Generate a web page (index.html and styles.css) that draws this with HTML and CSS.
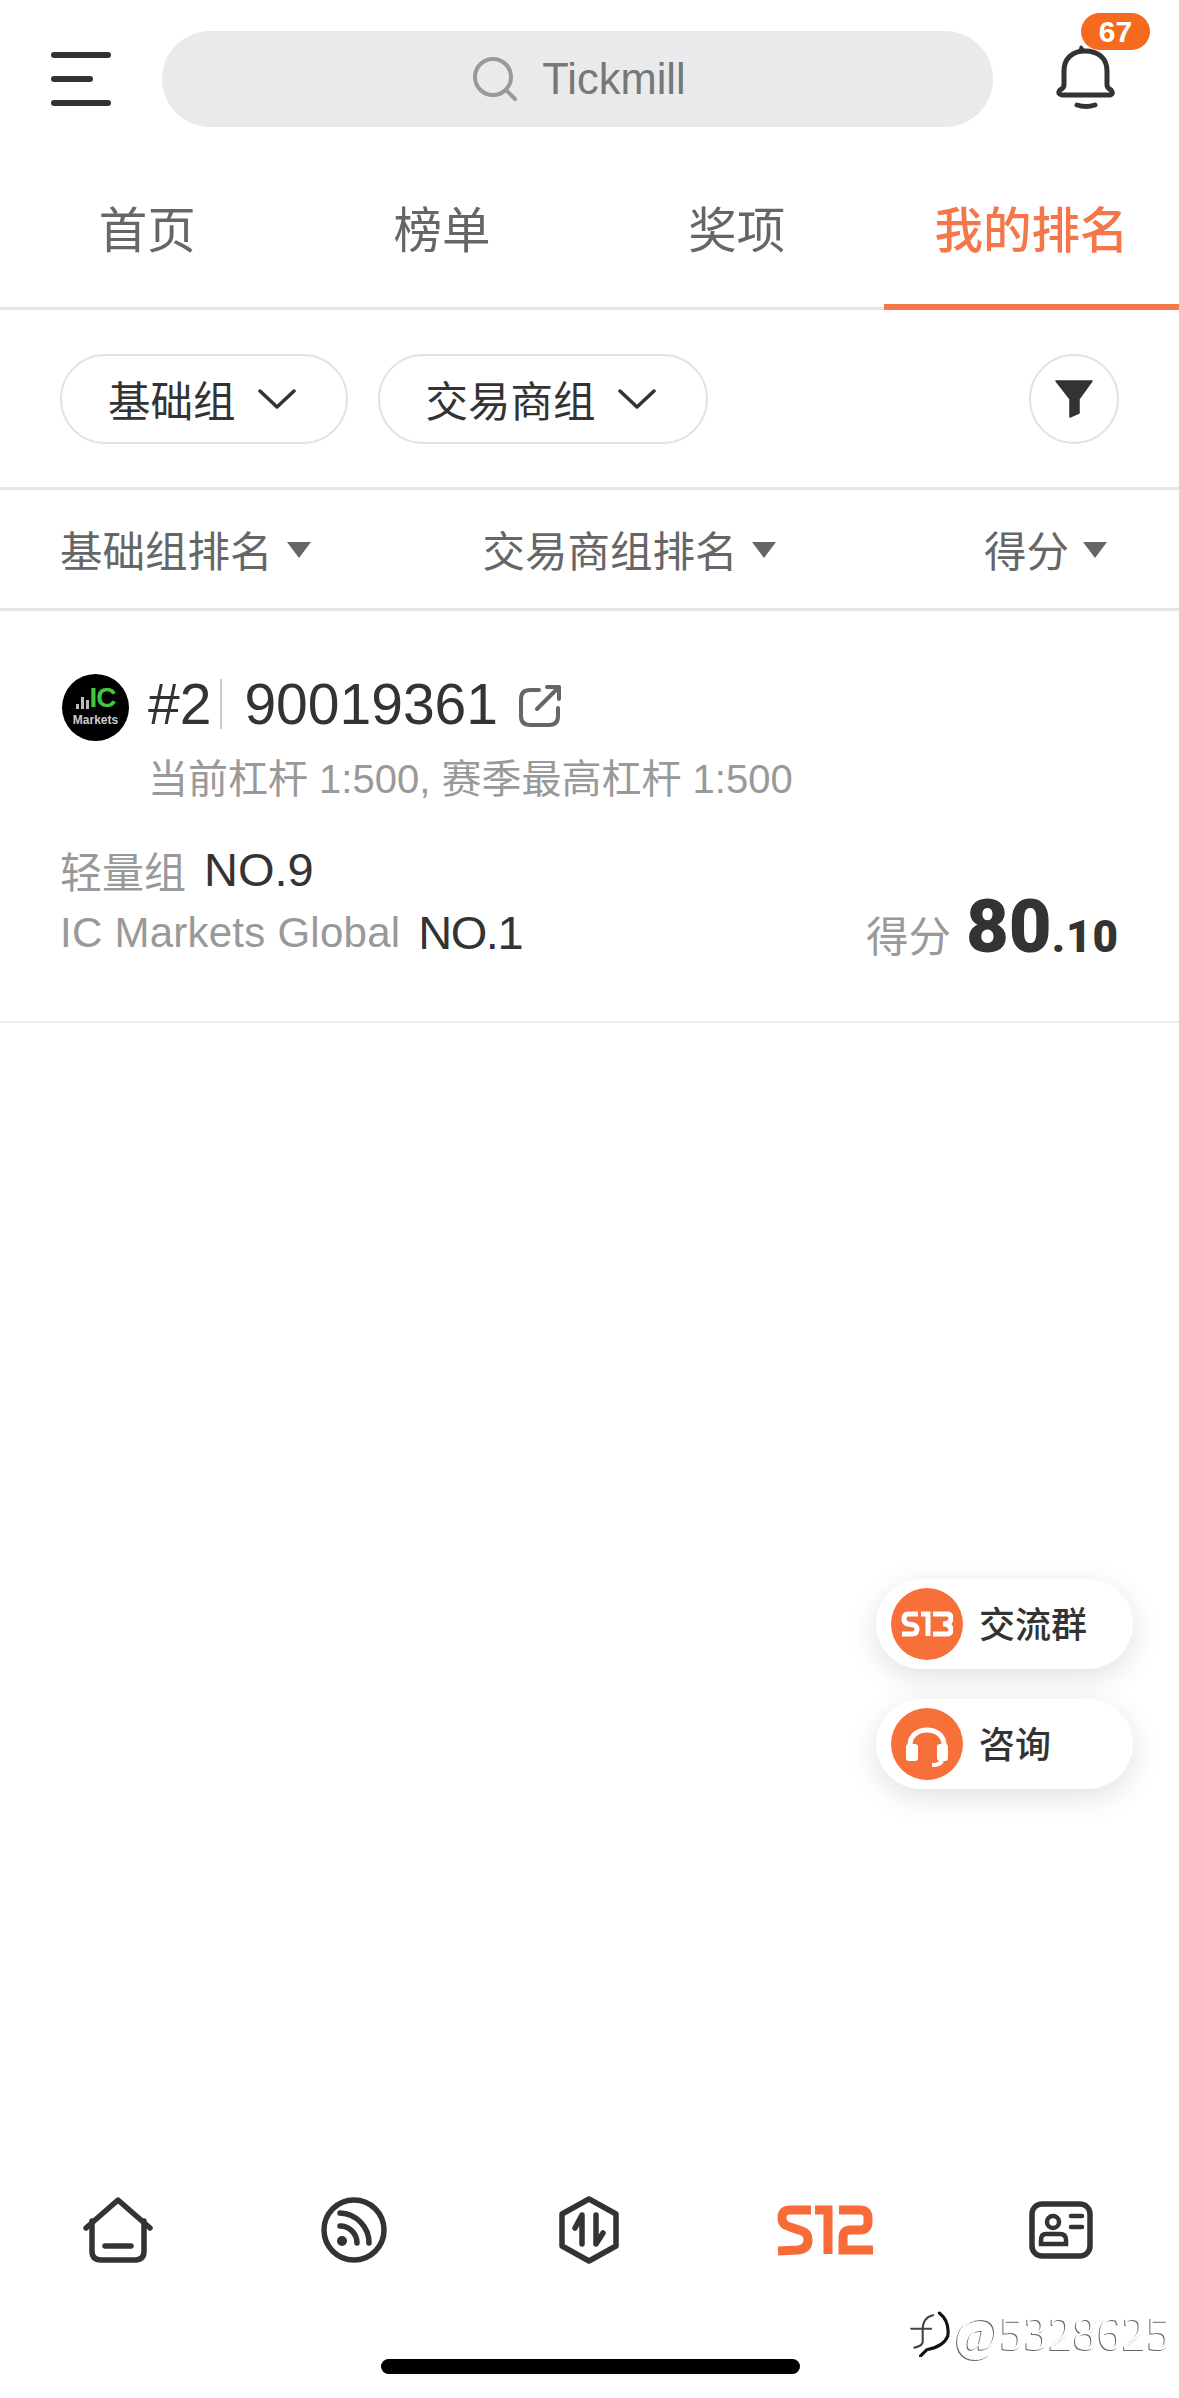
FILE: index.html
```html
<!DOCTYPE html>
<html lang="zh">
<head>
  <meta charset="UTF-8">
  <meta name="viewport" content="width=device-width, initial-scale=1.0">
  <title>我的排名</title>
  <link rel="stylesheet" href="styles.css">
</head>
<body>
<div class="page">
  <!-- Header -->
  <div class="header">
    <div class="menu"><span></span><span class="short"></span><span></span></div>
    <div class="search">
      <svg class="search-icon" width="46" height="46" viewBox="0 0 46 46" fill="none" stroke="#999" stroke-width="4" stroke-linecap="round">
        <circle cx="21" cy="21" r="18"/>
        <path d="M34 34L43 43"/>
      </svg>
      <span>Tickmill</span>
    </div>
    <div class="bell">
      <svg width="60" height="66" viewBox="0 0 60 66" fill="none" stroke="#333" stroke-width="5" stroke-linejoin="round" stroke-linecap="round">
        <path d="M8 41V27C8 14 17 7 29 7C42 7 51 14 51 27V41Q51 44 55 46Q58 50 54 51H6Q1 50 4 46Q8 44 8 41Z"/>
        <path d="M24 7L25 3L28 7" stroke-width="3"/>
        <path d="M21 61Q30 64 39 61"/>
      </svg>
      <span class="badge">67</span>
    </div>
  </div>

  <!-- Tabs -->
  <div class="tabs">
    <div class="tab">首页</div>
    <div class="tab">榜单</div>
    <div class="tab">奖项</div>
    <div class="tab active">我的排名</div>
  </div>

  <!-- Filters -->
  <div class="filters">
    <div class="pill">基础组
      <svg width="38" height="22" viewBox="0 0 38 22" fill="none" stroke="#333" stroke-width="3.5" stroke-linecap="round" stroke-linejoin="round"><path d="M2 3L19 19L36 3"/></svg>
    </div>
    <div class="pill">交易商组
      <svg width="38" height="22" viewBox="0 0 38 22" fill="none" stroke="#333" stroke-width="3.5" stroke-linecap="round" stroke-linejoin="round"><path d="M2 3L19 19L36 3"/></svg>
    </div>
    <div class="pill-round">
      <svg width="38" height="38" viewBox="0 0 38 38" fill="#333"><path d="M1 1H37L24 19V33L15 37V19Z" stroke="#333" stroke-width="1.500" stroke-linejoin="round"/></svg>
    </div>
  </div>

  <!-- Sort row -->
  <div class="sort-row">
    <div class="sort-item sort-base">基础组排名<i></i></div>
    <div class="sort-item sort-broker">交易商组排名<i></i></div>
    <div class="sort-item sort-score">得分<i></i></div>
  </div>

  <!-- Rank card -->
  <div class="card">
    <div class="card-title">
      <div class="logo">
        <div class="logo-top">
          <span class="logo-bars"><b class="b1"></b><b class="b2"></b><b class="b3"></b></span>
          <span class="logo-ic">IC</span>
        </div>
        <div class="logo-name">Markets</div>
      </div>
      <span class="place">#2</span>
      <span class="account">90019361</span>
      <svg class="share" width="44" height="44" viewBox="0 0 44 44" fill="none" stroke="#666" stroke-width="4" stroke-linecap="round" stroke-linejoin="round">
        <path d="M21 6H12Q3 6 3 15V32Q3 41 12 41H31Q40 41 40 32V24"/>
        <path d="M19 25L40 4M29 3H41V15"/>
      </svg>
    </div>
    <div class="leverage">当前杠杆 1:500, 赛季最高杠杆 1:500</div>
    <div class="card-bottom">
      <div class="ranks">
        <div class="rank"><span>轻量组</span><b>NO.9</b></div>
        <div class="rank rank-broker"><span>IC Markets Global</span><b>NO.1</b></div>
      </div>
      <div class="score">
        <span class="score-label">得分</span>
        <span class="score-int">80</span><span class="score-dec">.10</span>
      </div>
    </div>
  </div>

  <!-- Empty list area + floating buttons -->
  <div class="content">
    <div class="float-btns">
      <div class="float-btn">
        <span class="float-icon">
          <svg width="52" height="26" viewBox="0 0 52 26" fill="none" stroke="#fff" stroke-width="5">
            <path d="M17 3H7Q3 3 3 8Q3 12 7 13L13 14Q16 15 16 18Q16 23 11 23H1"/>
            <path d="M20 3H27V25"/>
            <path d="M32 3H46Q50 3 50 7Q50 13 42 13Q50 13 50 19Q50 23 46 23H32"/>
          </svg>
        </span>
        <span class="float-text">交流群</span>
      </div>
      <div class="float-btn">
        <span class="float-icon">
          <svg width="46" height="46" viewBox="0 0 46 46" fill="none">
            <path d="M6 24C6 4 40 4 40 24" stroke="#fff" stroke-width="5"/>
            <rect x="2" y="23" width="12" height="17" rx="3" fill="#fff"/>
            <rect x="33" y="23" width="11" height="17" rx="3" fill="#fff"/>
            <path d="M38 38Q38 44 28 44" stroke="#fff" stroke-width="4"/>
          </svg>
        </span>
        <span class="float-text">咨询</span>
      </div>
    </div>
  </div>

  <!-- Bottom nav -->
  <div class="bottom-nav">
    <div class="nav-item">
      <svg width="70" height="66" viewBox="0 0 70 66" fill="none" stroke="#333" stroke-width="5.500" stroke-linecap="round" stroke-linejoin="round">
        <path d="M3 31L35 3L67 31"/>
        <path d="M9 24V54Q9 63 18 63H52Q61 63 61 54V24"/>
        <path d="M22 49H48"/>
      </svg>
    </div>
    <div class="nav-item">
      <svg width="66" height="66" viewBox="0 0 66 66" fill="none" stroke="#333" stroke-width="5.500" stroke-linecap="round">
        <circle cx="33" cy="33" r="30"/>
        <circle cx="21" cy="44" r="5" fill="#333" stroke="none"/>
        <path d="M19 16A30 30 0 0 1 48 46"/>
        <path d="M19 29A17 17 0 0 1 36 46"/>
      </svg>
    </div>
    <div class="nav-item">
      <svg width="62" height="68" viewBox="0 0 62 68" fill="none" stroke="#333" stroke-width="5.500" stroke-linecap="round" stroke-linejoin="round">
        <path d="M31 3L58 18V50L31 65L4 50V18Z"/>
        <path d="M24 48V19L17 32"/>
        <path d="M38 19V48L45 37"/>
      </svg>
    </div>
    <div class="nav-item">
      <svg width="98" height="52" viewBox="0 0 98 52" fill="none" stroke="#f76b38" stroke-width="9">
        <path d="M35 6H14Q6 6 6 14Q6 21 14 23L26 27Q32 29 32 36Q32 45 22 46L2 47"/>
        <path d="M39 6H52V50"/>
        <path d="M63 6H84Q92 6 92 14V18Q92 26 84 26H74Q67 26 67 34V46H97"/>
      </svg>
    </div>
    <div class="nav-item">
      <svg width="64" height="58" viewBox="0 0 64 58" fill="none" stroke="#333" stroke-width="5.500" stroke-linecap="round">
        <rect x="3" y="3" width="58" height="52" rx="10"/>
        <circle cx="24" cy="21" r="6" stroke-width="4.500"/>
        <path d="M17 33H31Q37 33 37 39V43H12V39Q12 33 17 33Z" stroke-width="4.500"/>
        <path d="M42 15H53M42 26H53" stroke-width="4.500"/>
      </svg>
    </div>
  </div>

  <div class="home-area"><div class="home-bar"></div></div>

  <!-- Repost watermark -->
  <div class="watermark">
    <svg width="46" height="46" viewBox="0 0 42 44" fill="none" stroke="#111" stroke-width="3" stroke-linecap="round">
      <path d="M30 2Q40 10 38 24Q34 34 18 37L12 43"/>
      <path d="M24 4Q14 6 14 18V30Q13 34 6 35M3 17H22" stroke="#444" stroke-width="2"/>
    </svg>
    <span>@5328625</span>
  </div>
</div>
</body>
</html>
```

FILE: styles.css
```css
* {
    box-sizing: border-box;
}
body {
    margin: 0;
    background-color: white;
    font-family: "Liberation Sans", "Noto Sans CJK SC", sans-serif;
    color: #333;
}
.page {
    position: relative;
    display: flex;
    flex-direction: column;
    height: 2398px;
    overflow: hidden;
}

/* Header */
.header {
    display: flex;
    align-items: center;
    height: 158px;
    padding-left: 51px;
}
.menu {
    display: flex;
    flex-direction: column;
    gap: 18px;
    width: 60px;
    margin-right: 51px;
}
.menu span {
    display: block;
    height: 6px;
    background-color: #333;
    border-radius: 3px;
}
.menu .short {
    width: 42px;
}
.search {
    display: flex;
    align-items: center;
    justify-content: center;
    gap: 24px;
    width: 831px;
    height: 96px;
    padding-left: 3px;
    background-color: #e9eaeb;
    border-radius: 48px;
    color: #777;
    font-size: 43.500px;
}
.bell {
    position: relative;
    width: 60px;
    height: 66px;
    margin-left: 63px;
    margin-top: -4px;
}
.bell svg {
    display: block;
}
.badge {
    position: absolute;
    top: -31px;
    left: 25px;
    width: 69px;
    height: 37px;
    background-color: #f56a1e;
    border-radius: 19px;
    color: #fff;
    font-size: 30px;
    line-height: 37px;
    text-align: center;
    font-weight: bold;
}

/* Tabs */
.tabs {
    display: grid;
    grid-template-columns: repeat(4, 1fr);
    height: 152px;
    border-bottom: 3px solid #e6e6e6;
}
.tab {
    position: relative;
    padding-top: 41px;
    text-align: center;
    font-size: 48.500px;
    line-height: 64px;
    color: #666;
}
.tab.active {
    color: #f4774a;
    font-weight: 500;
}
.tab.active::after {
    content: "";
    position: absolute;
    left: 0;
    right: 0;
    bottom: -3px;
    height: 6px;
    background-color: #f7794b;
}

/* Filters */
.filters {
    display: flex;
    align-items: center;
    gap: 30px;
    height: 180px;
    padding: 0 60px 0 60px;
    border-bottom: 3px solid #e6e6e6;
}
.pill {
    display: flex;
    align-items: center;
    gap: 22px;
    height: 90px;
    padding: 0 50px 0 46px;
    border: 2px solid #e3e3e3;
    border-radius: 45px;
    font-size: 42.500px;
}
.pill-round {
    display: flex;
    align-items: center;
    justify-content: center;
    width: 90px;
    height: 90px;
    margin-left: auto;
    border: 2px solid #e3e3e3;
    border-radius: 50%;
}

/* Sort row */
.sort-row {
    position: relative;
    display: flex;
    align-items: center;
    height: 121px;
    padding-bottom: 2px;
    border-bottom: 3px solid #e6e6e6;
    font-size: 42.500px;
    color: #666;
}
.sort-item {
    display: flex;
    align-items: center;
    gap: 14px;
}
.sort-item i {
    display: block;
    width: 0;
    height: 0;
    margin-top: 4px;
    border-left: 12px solid transparent;
    border-right: 12px solid transparent;
    border-top: 16px solid #666;
}
.sort-base {
    margin-left: 60px;
}
.sort-broker {
    margin-left: 172px;
}
.sort-score {
    margin-left: auto;
    margin-right: 72px;
}

/* Rank card */
.card {
    height: 412px;
    padding: 63px 60px 0 62px;
    border-bottom: 2px solid #eee;
}
.card-title {
    display: flex;
    align-items: center;
    height: 67px;
}
.logo {
    display: flex;
    flex-direction: column;
    align-items: center;
    justify-content: center;
    width: 67px;
    height: 67px;
    background-color: #000;
    border-radius: 50%;
}
.logo-top {
    display: flex;
    align-items: flex-end;
    gap: 1px;
    height: 22px;
    margin-top: -2px;
}
.logo-bars {
    display: flex;
    align-items: flex-end;
    gap: 2px;
    height: 15px;
}
.logo-bars b {
    display: block;
    width: 3px;
    background-color: #bbb;
}
.logo-bars .b1 {
    height: 5px;
}
.logo-bars .b2 {
    height: 12px;
}
.logo-bars .b3 {
    height: 9px;
}
.logo-ic {
    color: #3fc83c;
    font-size: 28px;
    line-height: 22px;
    letter-spacing: -1px;
    font-weight: bold;
}
.logo-name {
    margin-top: 5px;
    color: #ccc;
    font-size: 12px;
    line-height: 12px;
    font-weight: bold;
}
.place {
    margin-left: 19px;
    margin-bottom: 8px;
    padding-right: 9px;
    border-right: 2px solid #ccc;
    font-size: 57px;
    line-height: 50px;
}
.account {
    margin-left: 22px;
    margin-bottom: 8px;
    font-size: 57px;
    line-height: 50px;
}
.share {
    margin-left: 20px;
    margin-bottom: 3px;
}
.leverage {
    margin-top: 13px;
    padding-left: 86px;
    color: #999;
    font-size: 40px;
    line-height: 50px;
}
.card-bottom {
    display: flex;
    align-items: flex-end;
    justify-content: space-between;
    margin-top: 34px;
    margin-left: -2px;
}
.rank {
    display: flex;
    align-items: center;
    gap: 18px;
    height: 63px;
    color: #999;
    font-size: 42px;
}
.rank b {
    color: #333;
    font-size: 47px;
    font-weight: normal;
}
.rank-broker span {
    letter-spacing: 0.250px;
}
.rank-broker b {
    letter-spacing: -1.500px;
}
.score {
    display: flex;
    align-items: baseline;
    height: 74px;
    font-family: Roboto, "Noto Sans CJK SC", sans-serif;
}
.score-label {
    margin-right: 15px;
    color: #999;
    font-size: 42.500px;
}
.score-int {
    font-size: 74px;
    line-height: 74px;
    font-weight: 900;
}
.score-dec {
    font-size: 44px;
    font-weight: 900;
    letter-spacing: 1px;
}

/* Middle + floating buttons */
.content {
    position: relative;
    flex: 1;
}
.float-btns {
    position: absolute;
    top: 556px;
    right: 46px;
    display: flex;
    flex-direction: column;
    gap: 30px;
}
.float-btn {
    display: flex;
    align-items: center;
    gap: 16px;
    width: 257px;
    height: 90px;
    padding-left: 15px;
    background-color: #fff;
    border-radius: 45px;
    box-shadow: 0 8px 30px rgba(0, 0, 0, 0.12);
    font-size: 36px;
    font-weight: 500;
}
.float-icon {
    display: flex;
    align-items: center;
    justify-content: center;
    width: 72px;
    height: 72px;
    background-color: #f7703a;
    border-radius: 50%;
}
.float-text {
    margin-top: -4px;
}

/* Bottom nav */
.bottom-nav {
    display: grid;
    grid-template-columns: repeat(5, 1fr);
    height: 140px;
}
.nav-item {
    display: flex;
    align-items: center;
    justify-content: center;
}
.home-area {
    height: 98px;
    padding-top: 59px;
}
.home-bar {
    width: 419px;
    height: 15px;
    margin-left: 381px;
    background-color: #000;
    border-radius: 8px;
}

.watermark {
    position: absolute;
    right: 8px;
    bottom: 36px;
    display: flex;
    align-items: center;
    gap: 1px;
    font-family: "Liberation Serif", serif;
    font-size: 49px;
    color: #fff;
    text-shadow: -1px 1px 0 #666;
}
```
